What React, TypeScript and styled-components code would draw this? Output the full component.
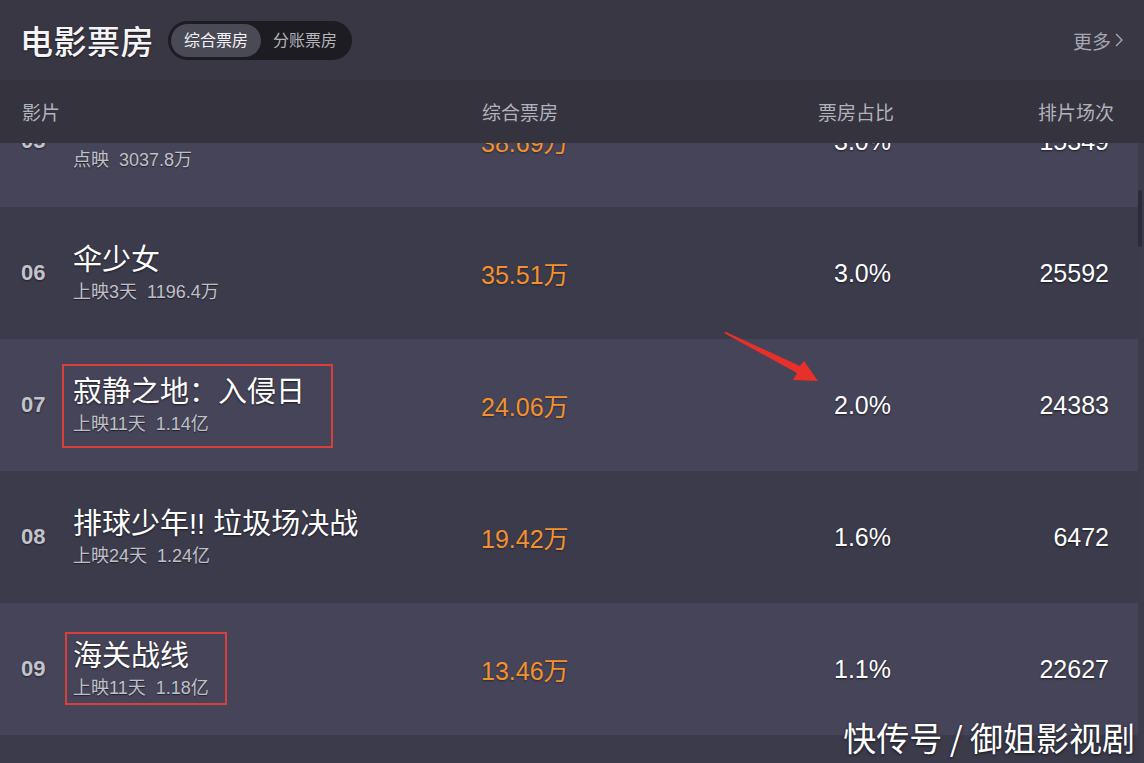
import React, { useLayoutEffect, useRef } from 'react';
import styled, { createGlobalStyle } from 'styled-components';

const GlobalStyle = createGlobalStyle`
  html, body {
    margin: 0;
    padding: 0;
    background: #383743;
  }
  body {
    font-family: "Liberation Sans", "Noto Sans CJK SC", sans-serif;
  }
`;

const Page = styled.div`
  position: relative;
  display: flex;
  flex-direction: column;
  width: 100%;
  height: 100vh;
  overflow: hidden;
  background: #383743;
`;

const TopBar = styled.div`
  display: flex;
  align-items: center;
  height: 80px;
  padding: 0 20px 0 20px;
  box-sizing: border-box;
  background: #383743;
`;

const Title = styled.h1`
  margin: 0 14px 0 0;
  font-size: 33px;
  font-weight: 500;
  color: #f4f4f6;
  letter-spacing: 0.5px;
  text-shadow: 0 1px 2px rgba(0, 0, 0, 0.6);
`;

const Toggle = styled.div`
  display: flex;
  align-items: center;
  height: 39px;
  padding: 0 3px;
  border-radius: 20px;
  background: #1d1c23;
`;

const ToggleItem = styled.div<{ $active?: boolean }>`
  height: 33px;
  line-height: 33px;
  padding: 0 ${p => (p.$active ? 13 : 12)}px;
  border-radius: 17px;
  font-size: 16px;
  color: ${p => (p.$active ? '#f2f2f4' : '#b3b3bb')};
  background: ${p => (p.$active ? '#4a4a57' : 'transparent')};
`;

const More = styled.div`
  margin-left: auto;
  display: flex;
  align-items: center;
  gap: 3px;
  font-size: 19px;
  color: #a7a7b3;
`;

const ColHead = styled.div`
  display: grid;
  grid-template-columns: 52px 408px 220px 194px 220px;
  align-items: center;
  height: 63px;
  padding-left: 21px;
  background: #34333e;
  font-size: 19px;
  color: #b2b2bb;
`;

const HeadCell = styled.div<{ $align?: string }>`
  text-align: ${p => p.$align || 'left'};
  padding-left: ${p => (p.$align === 'right' ? 0 : 1)}px;
  padding-right: ${p => (p.$align === 'right' ? 1 : 0)}px;
`;

const Body = styled.div`
  flex: 1;
  display: flex;
  min-height: 0;
  background: #3d3c4d;
`;

const List = styled.div`
  flex: 1;
  overflow: hidden;
`;

const Track = styled.div`
  width: 6px;
  flex-shrink: 0;
  background: #3d3c4d;
`;

const Thumb = styled.div`
  width: 4px;
  height: 57px;
  margin-top: 47px;
  border-radius: 2px;
  background: #2c2b37;
`;

const Row = styled.div`
  display: grid;
  grid-template-columns: 52px 408px 220px 194px 218px;
  align-items: center;
  height: 132px;
  padding-left: 21px;
  background: #3c3b4c;
  &:nth-child(odd) {
    background: #454458;
  }
`;

const Rank = styled.div`
  font-size: 22px;
  font-weight: 700;
  color: #c3c3cb;
  text-shadow: 0 1px 2px rgba(0, 0, 0, 0.5);
`;

const NameBlock = styled.div`
  position: relative;
  display: inline-flex;
  flex-direction: column;
  justify-self: start;
`;

const MovieName = styled.div`
  font-size: 29px;
  line-height: 36px;
  color: #ffffff;
  white-space: nowrap;
  text-shadow: 0 1px 2px rgba(0, 0, 0, 0.6);
`;

const Sub = styled.div`
  display: flex;
  gap: 10px;
  margin-top: 2px;
  font-size: 18px;
  line-height: 24px;
  color: #c0c0c9;
  white-space: nowrap;
  text-shadow: 0 1px 1px rgba(0, 0, 0, 0.5);
`;

const Mark = styled.div<{ $t: number; $r: number; $b: number; $l: number }>`
  position: absolute;
  top: ${p => p.$t}px;
  right: ${p => p.$r}px;
  bottom: ${p => p.$b}px;
  left: ${p => p.$l}px;
  border: 2px solid #d8403e;
  pointer-events: none;
`;

const BoxOffice = styled.div`
  font-size: 25px;
  color: #f2912e;
  text-shadow: 0 1px 2px rgba(0, 0, 0, 0.4);
`;

const Num = styled.div`
  text-align: right;
  padding-right: 4px;
  font-size: 25px;
  color: #ffffff;
  text-shadow: 0 1px 2px rgba(0, 0, 0, 0.6);
`;

const Arrow = styled.svg`
  position: absolute;
  left: 720px;
  top: 328px;
  pointer-events: none;
`;

const Watermark = styled.div`
  position: absolute;
  right: 9px;
  bottom: 2px;
  font-family: "Noto Sans CJK SC", sans-serif;
  font-size: 33px;
  color: #ffffff;
  text-shadow: 0 1px 3px rgba(0, 0, 0, 0.7);
`;

type Movie = {
  rank: string;
  name: string;
  days: string;
  total: string;
  box: string;
  share: string;
  shows: string;
  mark?: [number, number, number, number];
};

const movies: Movie[] = [
  { rank: '05', name: '死侍与金刚狼', days: '点映', total: '3037.8万', box: '38.69万', share: '3.0%', shows: '15349' },
  { rank: '06', name: '伞少女', days: '上映3天', total: '1196.4万', box: '35.51万', share: '3.0%', shows: '25592' },
  { rank: '07', name: '寂静之地：入侵日', days: '上映11天', total: '1.14亿', box: '24.06万', share: '2.0%', shows: '24383', mark: [-10, -28, -12, -11] },
  { rank: '08', name: '排球少年!! 垃圾场决战', days: '上映24天', total: '1.24亿', box: '19.42万', share: '1.6%', shows: '6472' },
  { rank: '09', name: '海关战线', days: '上映11天', total: '1.18亿', box: '13.46万', share: '1.1%', shows: '22627', mark: [-6, -18, -5, -8] },
];

function App() {
  const listRef = useRef<HTMLDivElement>(null);

  useLayoutEffect(() => {
    if (listRef.current) listRef.current.scrollTop = 68;
  }, []);

  return (
    <Page>
      <GlobalStyle />
      <TopBar>
        <Title>电影票房</Title>
        <Toggle>
          <ToggleItem $active>综合票房</ToggleItem>
          <ToggleItem>分账票房</ToggleItem>
        </Toggle>
        <More>
          更多
          <svg width="10" height="16" viewBox="0 0 10 16">
            <path d="M2 2 L8 8 L2 14" fill="none" stroke="#a7a7b3" strokeWidth="1.4" />
          </svg>
        </More>
      </TopBar>

      <ColHead>
        <HeadCell>影片</HeadCell>
        <HeadCell />
        <HeadCell>综合票房</HeadCell>
        <HeadCell $align="right">票房占比</HeadCell>
        <HeadCell $align="right">排片场次</HeadCell>
      </ColHead>

      <Body>
        <List ref={listRef}>
          {movies.map(m => (
            <Row key={m.rank}>
              <Rank>{m.rank}</Rank>
              <NameBlock>
                <MovieName>{m.name}</MovieName>
                <Sub>
                  <span>{m.days}</span>
                  <span>{m.total}</span>
                </Sub>
                {m.mark && <Mark $t={m.mark[0]} $r={m.mark[1]} $b={m.mark[2]} $l={m.mark[3]} />}
              </NameBlock>
              <BoxOffice>{m.box}</BoxOffice>
              <Num>{m.share}</Num>
              <Num>{m.shows}</Num>
            </Row>
          ))}
          <Row />
        </List>
        <Track>
          <Thumb />
        </Track>
      </Body>

      <Arrow width="110" height="60" viewBox="0 0 110 60">
        <polygon points="4,5 6,4 80,38 84,33 98,53 73,52 77,45" fill="#e8302a" />
      </Arrow>

      <Watermark>快传号 / 御姐影视剧</Watermark>
    </Page>
  );
}

export default App;
